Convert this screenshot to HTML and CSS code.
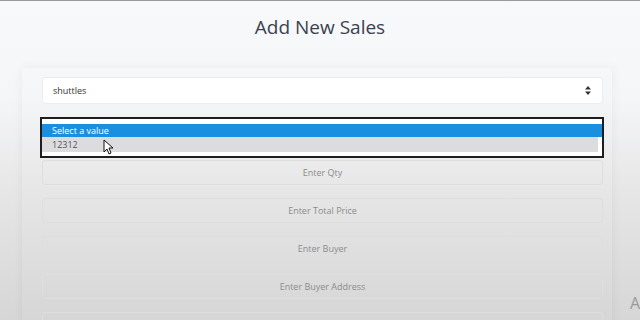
FILE: index.html
```html
<!DOCTYPE html>
<html lang="en">
<head>
  <meta charset="UTF-8">
  <title>Add New Sales</title>
  <link rel="stylesheet" href="styles.css">
</head>
<body>
  <div class="topline"></div>
  <h1 class="title">Add New Sales</h1>

  <div class="card">
    <form class="sales-form">
      <div class="select-box">
        <span>shuttles</span>
        <svg class="updown" width="6" height="9" viewBox="0 0 6 9">
          <path d="M3 0 L6 3.5 L0 3.5 Z M3 9 L6 5.5 L0 5.5 Z" fill="#333"/>
        </svg>
      </div>

      <div class="listbox">
        <div class="option selected">Select a value</div>
        <div class="option hover">12312
          <svg class="cursor" width="11" height="16" viewBox="0 0 11 16">
            <path d="M1 1 L1 13 L4 10 L6 15 L8 14 L6 9 L10 9 Z" fill="#fff" stroke="#111" stroke-width="1"/>
          </svg>
        </div>
      </div>

      <input class="field" type="text" placeholder="Enter Qty">
      <input class="field" type="text" placeholder="Enter Total Price">
      <input class="field" type="text" placeholder="Enter Buyer">
      <input class="field" type="text" placeholder="Enter Buyer Address">
      <input class="field" type="text" placeholder="">
    </form>
  </div>

  <span class="corner-letter">A</span>
</body>
</html>
```

FILE: styles.css
```css
html, body {
  height: 100%;
}

body {
  margin: 0;
  overflow: hidden;
  font-family: 'Open Sans', 'Liberation Sans', sans-serif;
  background: linear-gradient(to bottom, #f8f9fa 0%, #f5f6f7 30%, #e6e6e7 60%, #d6d6d6 100%);
  color: #333;
}

.topline {
  height: 1px;
  background-color: #9a9a9a;
}

.title {
  margin: 13px 0 0;
  text-align: center;
  font-size: 19px;
  font-weight: 400;
  color: #3b4150;
  line-height: 26px;
}

.card {
  margin: 28px 28px 0 22px;
  padding: 9px 10px 0 20px;
  box-shadow: 0 0 10px rgba(0, 0, 0, 0.06);
  height: 400px;
}

.sales-form {
  display: flex;
  flex-direction: column;
  width: 561px;
}

.select-box {
  display: flex;
  justify-content: space-between;
  align-items: center;
  height: 27px;
  padding: 0 11px 0 10px;
  background-color: #fff;
  border: 1px solid #ececec;
  border-radius: 3px;
  font-size: 9px;
  color: #333;
  box-sizing: border-box;
}

.listbox {
  margin: 13px -1px 0 -2px;
  border: 2px solid #1e1e1e;
  background-color: #fff;
  padding: 5px 0 4px;
  font-size: 9px;
}

.option {
  position: relative;
  padding-left: 10px;
  line-height: 13px;
}

.option.selected {
  background-color: #1b8fdf;
  color: #fff;
}

.option.hover {
  background-color: #dcdcdf;
  color: #555;
  margin-right: 4px;
  line-height: 15px;
}

.cursor {
  position: absolute;
  left: 61px;
  top: 2px;
}

.field {
  height: 25px;
  margin-top: 13px;
  border: 1px solid #dedede;
  border-radius: 3px;
  background-color: transparent;
  font-family: 'Open Sans', 'Liberation Sans', sans-serif;
  font-size: 9px;
  text-align: center;
  box-sizing: border-box;
}

.listbox + .field {
  margin-top: 2px;
}

.field::placeholder {
  color: #8c8c8c;
}

.corner-letter {
  position: absolute;
  right: 0;
  bottom: 6px;
  font-size: 16px;
  color: #9a9a9a;
}
```
